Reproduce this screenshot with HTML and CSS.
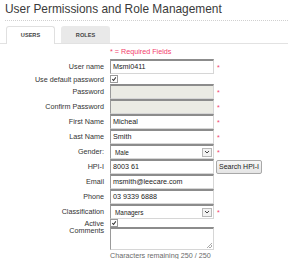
FILE: index.html
```html
<!DOCTYPE html>
<html lang="en">
<head>
    <meta charset="UTF-8">
    <meta name="viewport" content="width=device-width, initial-scale=1.0">
    <title>User Permissions and Role Management</title>
    <link rel="stylesheet" href="styles.css">
</head>
<body>
    <h1 class="page-title">User Permissions and Role Management</h1>
    <div class="dots"></div>
    <div class="tabs">
        <div class="tab active">USERS</div>
        <div class="tab">ROLES</div>
    </div>

    <div class="form">
        <div class="required-note">* = Required Fields</div>

        <div class="row">
            <label>User name</label>
            <div class="field"><div class="input">Msmi0411</div></div>
            <span class="star">*</span>
        </div>
        <div class="row short">
            <label>Use default password</label>
            <div class="field"><span class="check"><svg viewBox="0 0 7 7" width="7" height="7"><path d="M1.5 3.6 L3 5.2 L5.6 1.6" fill="none" stroke="#333" stroke-width="1.2"/></svg></span></div>
        </div>
        <div class="row">
            <label>Password</label>
            <div class="field"><div class="input disabled"></div></div>
            <span class="star">*</span>
        </div>
        <div class="row">
            <label>Confirm Password</label>
            <div class="field"><div class="input disabled"></div></div>
            <span class="star">*</span>
        </div>
        <div class="row">
            <label>First Name</label>
            <div class="field"><div class="input">Micheal</div></div>
            <span class="star">*</span>
        </div>
        <div class="row">
            <label>Last Name</label>
            <div class="field"><div class="input">Smith</div></div>
            <span class="star">*</span>
        </div>
        <div class="row">
            <label>Gender:</label>
            <div class="field"><div class="select"><span>Male</span><span class="arrow"><svg viewBox="0 0 8 8" width="8" height="8"><path d="M2 3 L4 5 L6 3" fill="none" stroke="#444" stroke-width="1"/></svg></span></div></div>
            <span class="star">*</span>
        </div>
        <div class="row">
            <label>HPI-I</label>
            <div class="field"><div class="input">8003 61</div></div>
            <button class="btn">Search HPI-I</button>
        </div>
        <div class="row">
            <label>Email</label>
            <div class="field"><div class="input">msmith@leecare.com</div></div>
        </div>
        <div class="row">
            <label>Phone</label>
            <div class="field"><div class="input">03 9339 6888</div></div>
        </div>
        <div class="row">
            <label>Classification</label>
            <div class="field"><div class="select"><span>Managers</span><span class="arrow"><svg viewBox="0 0 8 8" width="8" height="8"><path d="M2 3 L4 5 L6 3" fill="none" stroke="#444" stroke-width="1"/></svg></span></div></div>
            <span class="star">*</span>
        </div>
        <div class="row tiny">
            <label>Active</label>
            <div class="field"><span class="check"><svg viewBox="0 0 7 7" width="7" height="7"><path d="M1.5 3.6 L3 5.2 L5.6 1.6" fill="none" stroke="#333" stroke-width="1.2"/></svg></span></div>
        </div>
        <div class="row top">
            <label>Comments</label>
            <div class="field"><div class="textarea"><span class="grip"></span></div></div>
        </div>
        <div class="row note">
            <span></span>
            <div class="field">Characters remaining 250 / 250</div>
        </div>
    </div>
</body>
</html>
```

FILE: styles.css
```css
body {
    margin: 0;
    font-family: "Liberation Sans", Arial, sans-serif;
    color: #333;
    background: #fff;
    overflow: hidden;
}
.page-title {
    margin: 0;
    padding: 2px 0 0 5px;
    height: 17px;
    font-size: 11.9px;
    font-weight: normal;
    color: #3a3a3a;
}
.dots {
    margin: 1px 0 0 5px;
    border-top: 1px dotted #d0d0d0;
}
.tabs {
    display: flex;
    gap: 6px;
    padding: 5px 0 0 6px;
    border-bottom: 1px solid #e2e2e2;
}
.tab {
    width: 49px;
    height: 17px;
    line-height: 17px;
    text-align: center;
    font-size: 5.6px;
    font-weight: bold;
    color: #444;
    background: #e9e9e9;
    border-radius: 3px 3px 0 0;
    border: 1px solid #e9e9e9;
    border-bottom: none;
    box-sizing: border-box;
}
.tab.active {
    background: #fff;
    border-color: #e0e0e0;
    margin-bottom: -1px;
    height: 18px;
}
.form {
    font-size: 7.2px;
}
.required-note {
    color: #f2406c;
    padding-left: 110px;
    height: 13px;
    line-height: 11px;
    margin-top: 2px;
}
.row {
    display: grid;
    grid-template-columns: 104px 104px auto;
    column-gap: 6px;
    height: 15px;
    align-items: center;
}
.row label {
    text-align: right;
}
.row.short {
    height: 10px;
}
.row.tiny {
    height: 7px;
    line-height: 7px;
}
.row.top {
    height: 25px;
    align-items: start;
}
.row.top label {
    margin-top: 1px;
    line-height: 8px;
}
.row.note {
    height: 9px;
    color: #6a6a6a;
}
.field {
    display: flex;
    align-items: center;
}
.input, .select {
    box-sizing: border-box;
    width: 104px;
    height: 15px;
    border-top: 2px solid #8c8c8c;
    border-left: 1px solid #9a9a9a;
    border-right: 1px solid #d6d6d6;
    border-bottom: 1px solid #d6d6d6;
    background: #fff;
    padding-left: 2px;
    line-height: 11px;
    color: #222;
    font-size: 7.2px;
}
.input.disabled {
    background: #ebebe4;
}
.select {
    display: flex;
    justify-content: space-between;
    align-items: center;
    padding-left: 4px;
    font-size: 6.4px;
}
.arrow {
    width: 10px;
    height: 9px;
    margin-right: 1px;
    border: 1px solid #b8b8b8;
    background: #f2f2f2;
    display: flex;
    align-items: center;
    justify-content: center;
    box-sizing: border-box;
}
.star {
    color: #f2406c;
    font-size: 7px;
    margin-left: -3px;
    padding-top: 1px;
}
.check {
    width: 6px;
    height: 6px;
    border: 1px solid #9a9a9a;
    display: flex;
    align-items: center;
    justify-content: center;
    background: #fff;
}
.check svg {
    width: 6px;
    height: 6px;
}
.btn {
    margin-left: -4px;
    height: 14px;
    padding: 0 2px;
    font-family: "Liberation Sans", Arial, sans-serif;
    font-size: 7px;
    color: #222;
    background: linear-gradient(#f7f7f7, #e4e4e4);
    border: 1px solid #a8a8a8;
    border-radius: 2px;
    justify-self: start;
}
.textarea {
    position: relative;
    box-sizing: border-box;
    width: 104px;
    height: 23px;
    margin-top: 1px;
    border-top: 2px solid #8c8c8c;
    border-left: 1px solid #9a9a9a;
    border-right: 1px solid #d6d6d6;
    border-bottom: 1px solid #d6d6d6;
}
.grip {
    position: absolute;
    right: 1px;
    bottom: 1px;
    width: 5px;
    height: 5px;
    background: linear-gradient(135deg, transparent 45%, #aaa 45%, #aaa 55%, transparent 55%, transparent 70%, #aaa 70%, #aaa 80%, transparent 80%);
}
```
